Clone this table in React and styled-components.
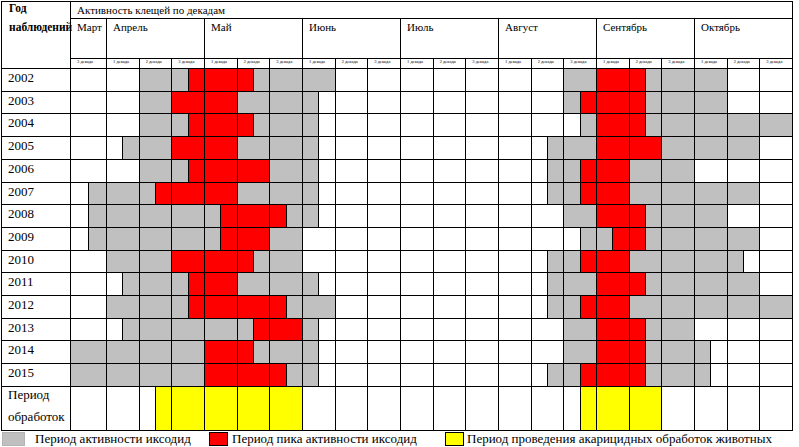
import React from 'react';
import styled, { createGlobalStyle } from 'styled-components';

const COLORS = { W: '#ffffff', G: '#c0c0c0', R: '#ff0000', Y: '#ffff00' };

const MONTHS = [
  { name: 'Март', span: 1, decades: ['3 декада'] },
  { name: 'Апрель', span: 3 },
  { name: 'Май', span: 3 },
  { name: 'Июнь', span: 3 },
  { name: 'Июль', span: 3 },
  { name: 'Август', span: 3 },
  { name: 'Сентябрь', span: 3 },
  { name: 'Октябрь', span: 3 },
];

const DECADE_LABELS = MONTHS.flatMap((m) =>
  m.decades ? m.decades : ['1 декада', '2 декада', '3 декада']
);

const ROWS = [
  ['2002', 'W W G GR R RG G G W W W W W W W G R RG G G W W'],
  ['2003', 'W W G R R G G GW W W W W W W W GR R RG G G W W'],
  ['2004', 'W W G GR R RG G GW W W W W W W W WG R RG G G G G'],
  ['2005', 'W WG G R R G G GW W W W W W W WG G R R G G G W'],
  ['2006', 'W W G GR R R G GW W W W W W W WG GR R G G W W W'],
  ['2007', 'WG G GR R R G G GW W W W W W W WG GR R G G G G W'],
  ['2008', 'WG G G G GR R RG GW W W W W W W W G R RG G G W W'],
  ['2009', 'WG G G G GR R G W W W W W W W W WG GR RG G G G W'],
  ['2010', 'W G G R R RG G W W W W W W W WG GR R G G G GW W'],
  ['2011', 'W WG G GR R G G GW W W W W W W WG G R RG G G G W'],
  ['2012', 'W G G GR R R RG G W W W W W W WG GR R G G G G G'],
  ['2013', 'W WG G G G GR R GW W W W W W W W G R RG G W W W'],
  ['2014', 'G G G G R RG G GW W W W W W W W G R RG G GW W W'],
  ['2015', 'G G G G R R RG GW W W W W W W WG GR R RG G GW W W'],
];

const TREATMENT = 'W W WY Y Y Y Y W W W W W W W W WY Y Y W W W W';

const GlobalStyle = createGlobalStyle`
  html, body {
    margin: 0;
    padding: 0;
    background: #ffffff;
  }
  body {
    font-family: "Liberation Serif", "Times New Roman", serif;
    color: #000000;
  }
`;

const Page = styled.div`
  width: 799px;
  height: 447px;
  overflow: hidden;
  padding: 1px 0 0 1px;
  box-sizing: border-box;
`;

const Table = styled.div`
  display: grid;
  width: 792px;
  box-sizing: border-box;
  grid-template-columns: 69px 36px repeat(21, 1fr);
  grid-template-rows: 17px 40px 10px repeat(14, 22.71px) 44px;
  border-left: 1px solid #000;
  border-top: 1px solid #000;
`;

const Cell = styled.div`
  box-sizing: border-box;
  min-width: 0;
  border-right: 1px solid #000;
  border-bottom: 1px solid #000;
  grid-column: span ${(p) => p.$span || 1};
  grid-row: span ${(p) => p.$rows || 1};
`;

const YearHead = styled(Cell)`
  display: flex;
  flex-direction: column;
  gap: 6px;
  padding-left: 7px;
  font-size: 11.5px;
  line-height: 13px;
  font-weight: bold;
  white-space: nowrap;
`;

const TitleHead = styled(Cell)`
  padding-left: 6px;
  font-size: 11px;
  line-height: 16px;
  white-space: nowrap;
`;

const MonthHead = styled(Cell)`
  padding-left: 6px;
  font-size: 11px;
  line-height: 16px;
  white-space: nowrap;
`;

const DecadeLabel = styled(Cell)`
  padding-left: 6px;
  font-size: 4.5px;
  line-height: 6px;
  white-space: nowrap;
  overflow: hidden;
`;

const YearCell = styled(Cell)`
  padding: 1px 0 0 6px;
  font-size: 13px;
  line-height: 15px;
`;

const TreatLabel = styled(Cell)`
  display: flex;
  flex-direction: column;
  gap: 7px;
  padding-left: 6px;
  font-size: 13px;
  line-height: 15px;
`;

const DecadeCell = styled(Cell)`
  display: flex;
  overflow: hidden;
`;

const Half = styled.div`
  flex: 1 1 0;
  background: ${(p) => COLORS[p.$c]};
  border-right: ${(p) => (p.$split ? '1px solid #000' : 'none')};
`;

const Legend = styled.div`
  display: grid;
  grid-template-columns: 207px 236px auto;
  margin-top: 1px;
  padding-left: 1px;
  font-size: 13px;
  line-height: 13px;
  white-space: nowrap;
`;

const LegendItem = styled.div`
  display: flex;
  align-items: flex-start;
  gap: ${(p) => p.$gap}px;
`;

const Swatch = styled.div`
  flex: none;
  width: ${(p) => p.$w}px;
  height: 14px;
  box-sizing: border-box;
  background: ${(p) => COLORS[p.$c]};
  border: 1px solid ${(p) => (p.$c === 'G' ? '#b4b4b4' : '#000')};
`;

function Decade({ code }) {
  const a = code[0];
  const b = code[1] || code[0];
  return (
    <DecadeCell>
      {a === b ? (
        <Half $c={a} />
      ) : (
        <>
          <Half $c={a} $split />
          <Half $c={b} />
        </>
      )}
    </DecadeCell>
  );
}

export default function App() {
  return (
    <>
      <GlobalStyle />
      <Page>
        <Table>
          <YearHead $rows={3}>
            <span>Год</span>
            <span>наблюдений</span>
          </YearHead>
          <TitleHead $span={22}>Активность клещей по декадам</TitleHead>
          {MONTHS.map((m) => (
            <MonthHead key={m.name} $span={m.span}>
              {m.name}
            </MonthHead>
          ))}
          {DECADE_LABELS.map((d, i) => (
            <DecadeLabel key={i}>{d}</DecadeLabel>
          ))}
          {ROWS.map(([year, codes]) => (
            <React.Fragment key={year}>
              <YearCell>{year}</YearCell>
              {codes.split(' ').map((c, i) => (
                <Decade key={i} code={c} />
              ))}
            </React.Fragment>
          ))}
          <TreatLabel>
            <span>Период</span>
            <span>обработок</span>
          </TreatLabel>
          {TREATMENT.split(' ').map((c, i) => (
            <Decade key={i} code={c} />
          ))}
        </Table>
        <Legend>
          <LegendItem $gap={10}>
            <Swatch $c="G" $w={23} />
            <span>Период активности иксодид</span>
          </LegendItem>
          <LegendItem $gap={4}>
            <Swatch $c="R" $w={19} />
            <span>Период пика активности иксодид</span>
          </LegendItem>
          <LegendItem $gap={3}>
            <Swatch $c="Y" $w={19} />
            <span>Период проведения акарицидных обработок животных</span>
          </LegendItem>
        </Legend>
      </Page>
    </>
  );
}
